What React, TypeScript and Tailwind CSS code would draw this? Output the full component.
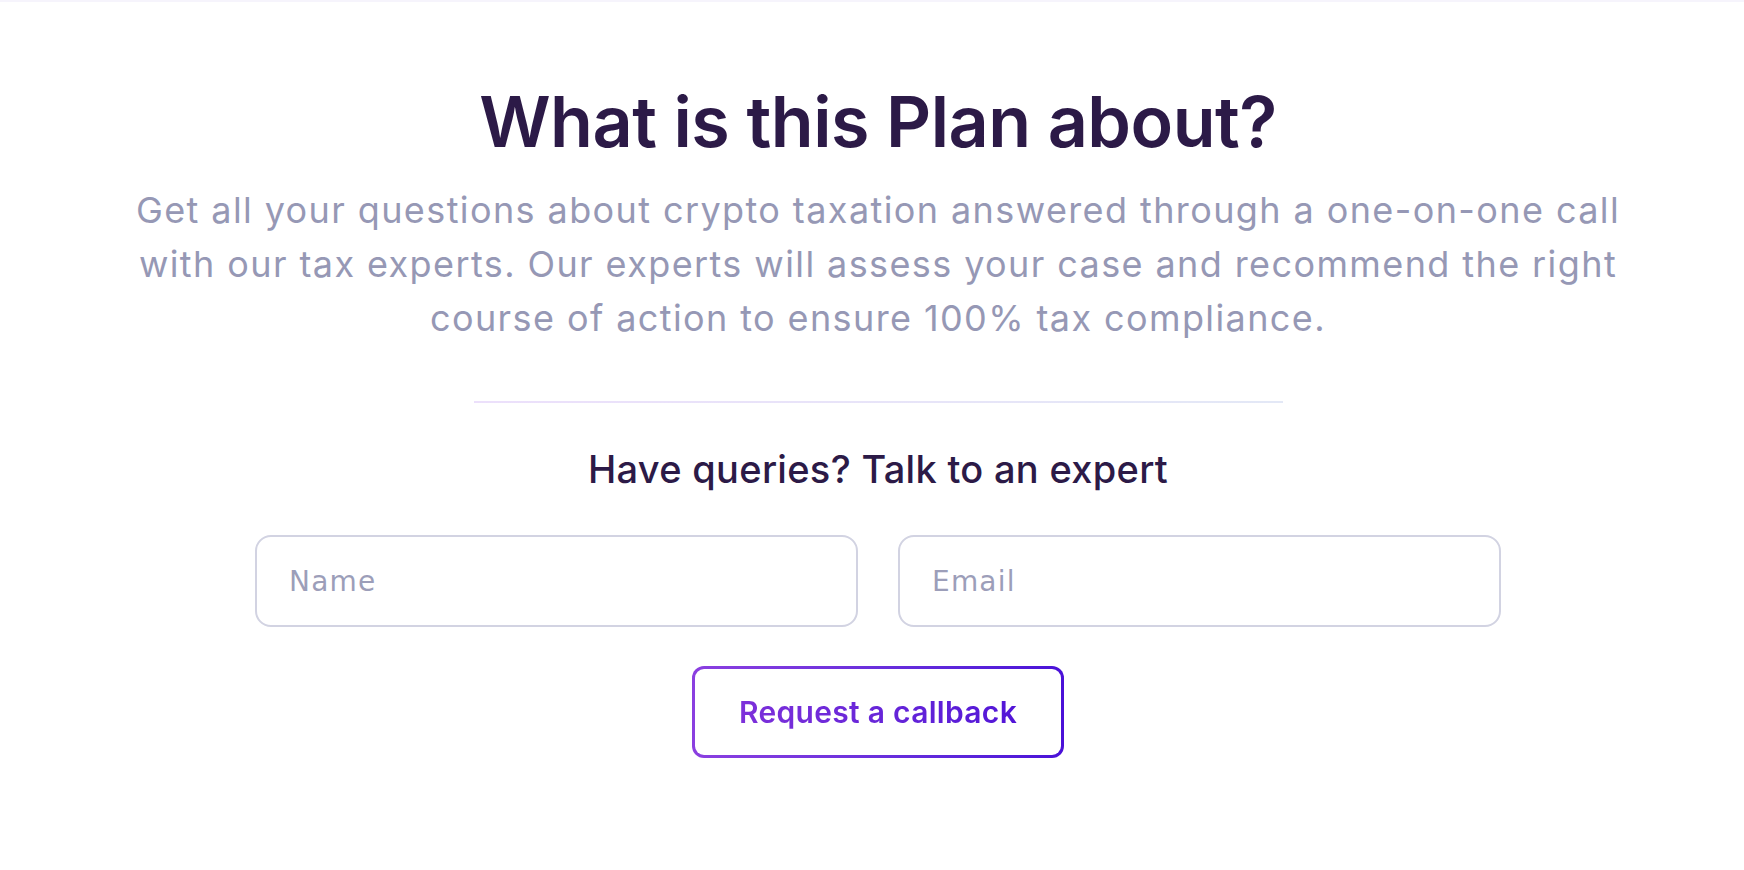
import React from "react"

export default function App() {
  return (
    <div className="min-h-[870px] w-full bg-white font-['Inter',sans-serif] border-t-2 border-[#f6f4fc]">
      <section className="flex flex-col items-center pl-[12px] pt-[78px] pb-20">
        <h1 className="text-[70px] leading-[84px] font-semibold text-[#2c1a47] tracking-[-0.5px] text-center">
          What is this Plan about?
        </h1>
        <p className="mt-[19px] max-w-[1510px] text-center text-[36px] leading-[54px] tracking-[1.4px] text-[#9698b5]">
          Get all your questions about crypto taxation answered through a one-on-one call with our tax experts. Our
          experts will assess your case and recommend the right course of action to ensure 100% tax compliance.
        </p>

        <div className="mt-[56px] h-[2px] w-[809px] bg-gradient-to-r from-[#ece0fb] to-[#e3e8f6]" />

        <h2 className="mt-[43px] text-[38px] leading-[46px] font-medium tracking-[0.3px] text-[#2c1a47] text-center">
          Have queries? Talk to an expert
        </h2>

        <form className="mt-[43px] flex flex-col items-center" onSubmit={(e) => e.preventDefault()}>
          <div className="flex gap-[40px]">
            <input
              type="text"
              placeholder="Name"
              className="h-[92px] w-[603px] rounded-[16px] border-2 border-[#d2d3e2] bg-white px-[32px] text-[28px] tracking-[1.2px] font-['DejaVu_Sans',sans-serif] text-[#2c1a47] placeholder:text-[#9c9eb9] outline-none"
            />
            <input
              type="email"
              placeholder="Email"
              className="h-[92px] w-[603px] rounded-[16px] border-2 border-[#d2d3e2] bg-white px-[32px] text-[28px] tracking-[1.2px] font-['DejaVu_Sans',sans-serif] text-[#2c1a47] placeholder:text-[#9c9eb9] outline-none"
            />
          </div>

          <div className="mt-[39px] rounded-[12px] bg-gradient-to-r from-[#8b3fe0] to-[#4a10d8] p-[3px]">
            <button
              type="submit"
              className="h-[86px] w-[366px] rounded-[9px] bg-white text-[30px] font-semibold tracking-[0.3px]"
            >
              <span className="bg-gradient-to-r from-[#7d30da] to-[#5214d7] bg-clip-text text-transparent">
                Request a callback
              </span>
            </button>
          </div>
        </form>
      </section>
    </div>
  )
}
